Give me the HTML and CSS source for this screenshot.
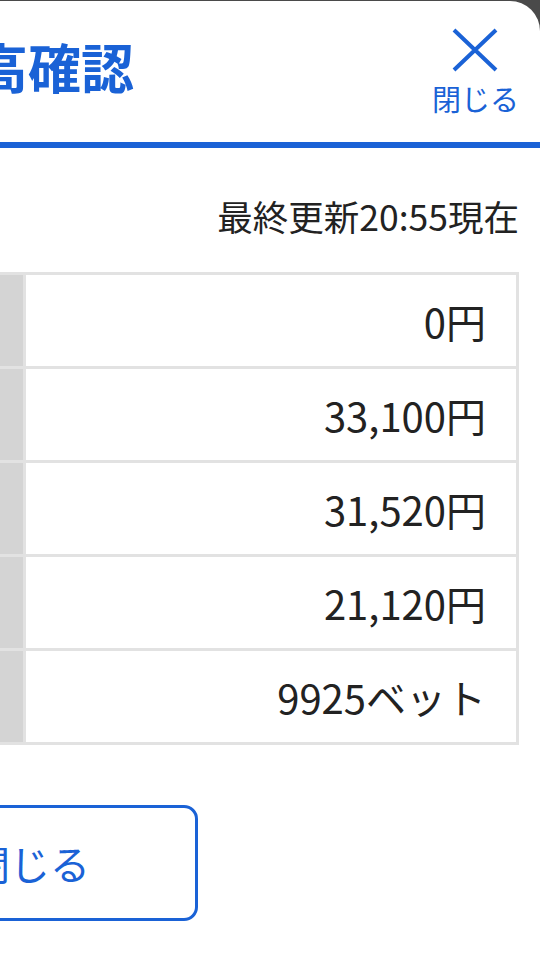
FILE: index.html
```html
<!DOCTYPE html>
<html lang="ja">
<head>
<meta charset="utf-8">
<title>残高確認</title>
<link rel="stylesheet" href="styles.css">
</head>
<body>
<div class="modal">
  <header class="head">
    <h1 class="title">残高確認</h1>
    <button class="close" type="button">
      <svg class="close-x" viewBox="0 0 46 44" width="46" height="44" aria-hidden="true">
        <path d="M2 2 L44 42 M44 2 L2 42" stroke="#1a62d6" stroke-width="4" fill="none"/>
      </svg>
      <span class="close-label">閉じる</span>
    </button>
  </header>
  <div class="body">
    <p class="updated">最終更新20:55現在</p>
    <table class="bal">
      <tr><th></th><td>0円</td></tr>
      <tr><th></th><td>33,100円</td></tr>
      <tr><th></th><td>31,520円</td></tr>
      <tr><th></th><td>21,120円</td></tr>
      <tr><th></th><td>9925ベット</td></tr>
    </table>
    <div class="actions">
      <button class="btn" type="button">閉じる</button>
    </div>
  </div>
</div>
</body>
</html>
```

FILE: styles.css
```css
html, body {
  margin: 0;
  padding: 0;
}
body {
  background: #4a4a4a;
  overflow: hidden;
  width: 540px;
  height: 960px;
  font-family: "Noto Sans CJK JP", "Noto Sans", sans-serif;
}
.modal {
  margin: 1px 0 0 -100px;
  width: 640px;
  height: 959px;
  background: #fff;
  border-radius: 30px 30px 0 0;
  box-sizing: border-box;
}
.head {
  display: flex;
  justify-content: space-between;
  align-items: center;
  height: 147px;
  box-sizing: border-box;
  padding: 0 21px 6px 22px;
  border-bottom: 6px solid #1a62d6;
}
.title {
  margin: 0 0 4px;
  font-size: 53px;
  font-weight: 700;
  color: #1a62d6;
  line-height: 1;
}
.close {
  display: flex;
  flex-direction: column;
  align-items: center;
  gap: 12px;
  background: none;
  border: 0;
  padding: 0;
  margin-top: 4px;
  font-family: inherit;
  color: #1a62d6;
}
.close-x { display: block; }
.close-label {
  font-size: 29px;
  line-height: 1;
}
.body {
  padding: 0 21px 0 28px;
}
.updated {
  margin: 48px 0 36px;
  text-align: right;
  font-size: 35.5px;
  line-height: 40px;
  color: #222;
}
.bal {
  width: 100%;
  border-collapse: collapse;
  border: 3px solid #e2e2e2;
}
.bal th {
  width: 92px;
  background: #d4d4d4;
  border: 3px solid #e2e2e2;
  padding: 0;
}
.bal td {
  height: 91px;
  border: 3px solid #e2e2e2;
  padding: 0 30px 0 0;
  text-align: right;
  font-size: 40px;
  color: #222;
}
.actions {
  margin-top: 60px;
  display: flex;
}
.btn {
  margin-left: -66px;
  width: 336px;
  height: 116px;
  background: #fff;
  border: 3px solid #1a62d6;
  border-radius: 14px;
  font-family: inherit;
  font-size: 40px;
  color: #1a62d6;
}
```
